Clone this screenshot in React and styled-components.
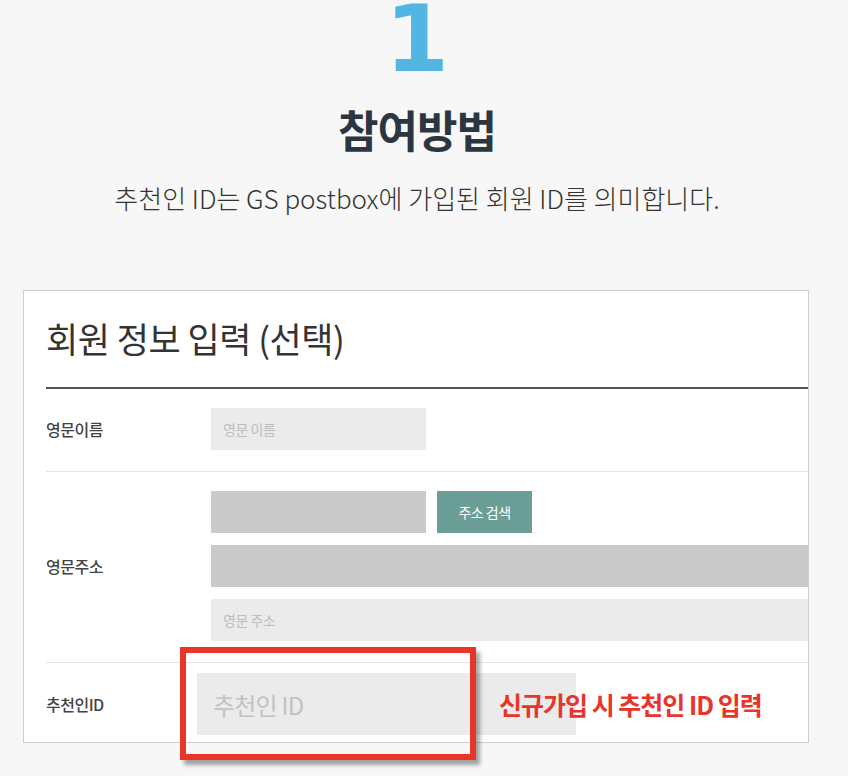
import styled, { createGlobalStyle } from 'styled-components';

const GlobalStyle = createGlobalStyle`
    html, body {
        margin:0;
        padding:0;
        background:#f7f7f7;
        font-family:"Noto Sans CJK KR", "Noto Sans", sans-serif;
    }
`;

const Page = styled.div`
    width:848px;
    min-height:776px;
    display:flex;
    flex-direction:column;
    align-items:flex-start;
`;

const Header = styled.div`
    width:834px;
    display:flex;
    flex-direction:column;
    align-items:center;
`;

const StepNumber = styled.div`
    font-family:"DejaVu Sans", sans-serif;
    font-size:92px;
    font-weight:700;
    line-height:80px;
    color:#52b5e2;
`;

const Title = styled.h1`
    margin:23px 0 0;
    font-size:44px;
    font-weight:700;
    line-height:53px;
    color:#2c3640;
    letter-spacing:-1px;
`;

const Desc = styled.p`
    margin:24px 0 0;
    font-size:26px;
    line-height:36px;
    font-weight:300;
    color:#333;
    letter-spacing:0;
`;

const Card = styled.div`
    margin:74px 0 0 23px;
    width:786px;
    background:#fff;
    border:1px solid #cfcfcf;
    padding-left:22px;
    box-sizing:border-box;
`;

const CardTitle = styled.h2`
    margin:0;
    padding:26px 0 28px;
    font-size:35px;
    font-weight:400;
    line-height:42px;
    color:#333;
    letter-spacing:-0.5px;
    border-bottom:2px solid #555;
`;

const Row = styled.div`
    display:flex;
    align-items:center;
    padding:${p => p.last ? '10px 0 7px' : '19px 0 21px'};
    border-bottom:${p => p.last ? 'none' : '1px solid #e6e6e6'};
    position:relative;
`;

const Label = styled.div`
    width:165px;
    flex-shrink:0;
    font-size:16px;
    font-weight:500;
    color:#444;
    letter-spacing:-0.5px;
`;

const Fields = styled.div`
    flex:1;
    display:flex;
    flex-direction:column;
    gap:12px;
`;

const FieldLine = styled.div`
    display:flex;
    gap:11px;
`;

const Input = styled.div`
    height:42px;
    width:${p => p.wide ? 'auto' : '215px'};
    flex-shrink:0;
    background:${p => p.filled ? '#cacaca' : '#ebebeb'};
    color:#bdbdbd;
    font-size:14px;
    display:flex;
    align-items:center;
    padding-left:12px;
    box-sizing:border-box;
    letter-spacing:-0.5px;
`;

const SearchButton = styled.button`
    height:42px;
    width:95px;
    border:none;
    background:#6a9e96;
    color:#fff;
    font-family:inherit;
    font-size:14px;
    letter-spacing:-0.5px;
    padding:0;
`;

const Highlight = styled.div`
    position:relative;
    margin-left:-14px;
    width:379px;
    height:62px;
    background:#ebebeb;
    color:#c2c2c2;
    font-size:24px;
    display:flex;
    align-items:center;
    padding-left:16px;
    box-sizing:border-box;
    letter-spacing:-0.8px;
`;

const RedFrame = styled.div`
    position:absolute;
    left:-17px;
    top:-26px;
    width:296px;
    height:113px;
    border:6px solid #e8342a;
    box-sizing:border-box;
    box-shadow:4px 5px 4px rgba(0,0,0,0.35);
`;

const Callout = styled.div`
    position:relative;
    margin-left:-77px;
    font-size:25px;
    font-weight:700;
    color:#e8342a;
    letter-spacing:-1px;
`;

export default function App() {
  return (
    <Page>
      <GlobalStyle />
      <Header>
        <StepNumber>1</StepNumber>
        <Title>참여방법</Title>
        <Desc>추천인 ID는 GS postbox에 가입된 회원 ID를 의미합니다.</Desc>
      </Header>
      <Card>
        <CardTitle>회원 정보 입력 (선택)</CardTitle>
        <Row>
          <Label>영문이름</Label>
          <Input>영문 이름</Input>
        </Row>
        <Row>
          <Label>영문주소</Label>
          <Fields>
            <FieldLine>
              <Input filled />
              <SearchButton>주소 검색</SearchButton>
            </FieldLine>
            <Input wide filled />
            <Input wide>영문 주소</Input>
          </Fields>
        </Row>
        <Row last>
          <Label>추천인ID</Label>
          <Highlight>
            추천인 ID
            <RedFrame />
          </Highlight>
          <Callout>신규가입 시 추천인 ID 입력</Callout>
        </Row>
      </Card>
    </Page>
  );
}
